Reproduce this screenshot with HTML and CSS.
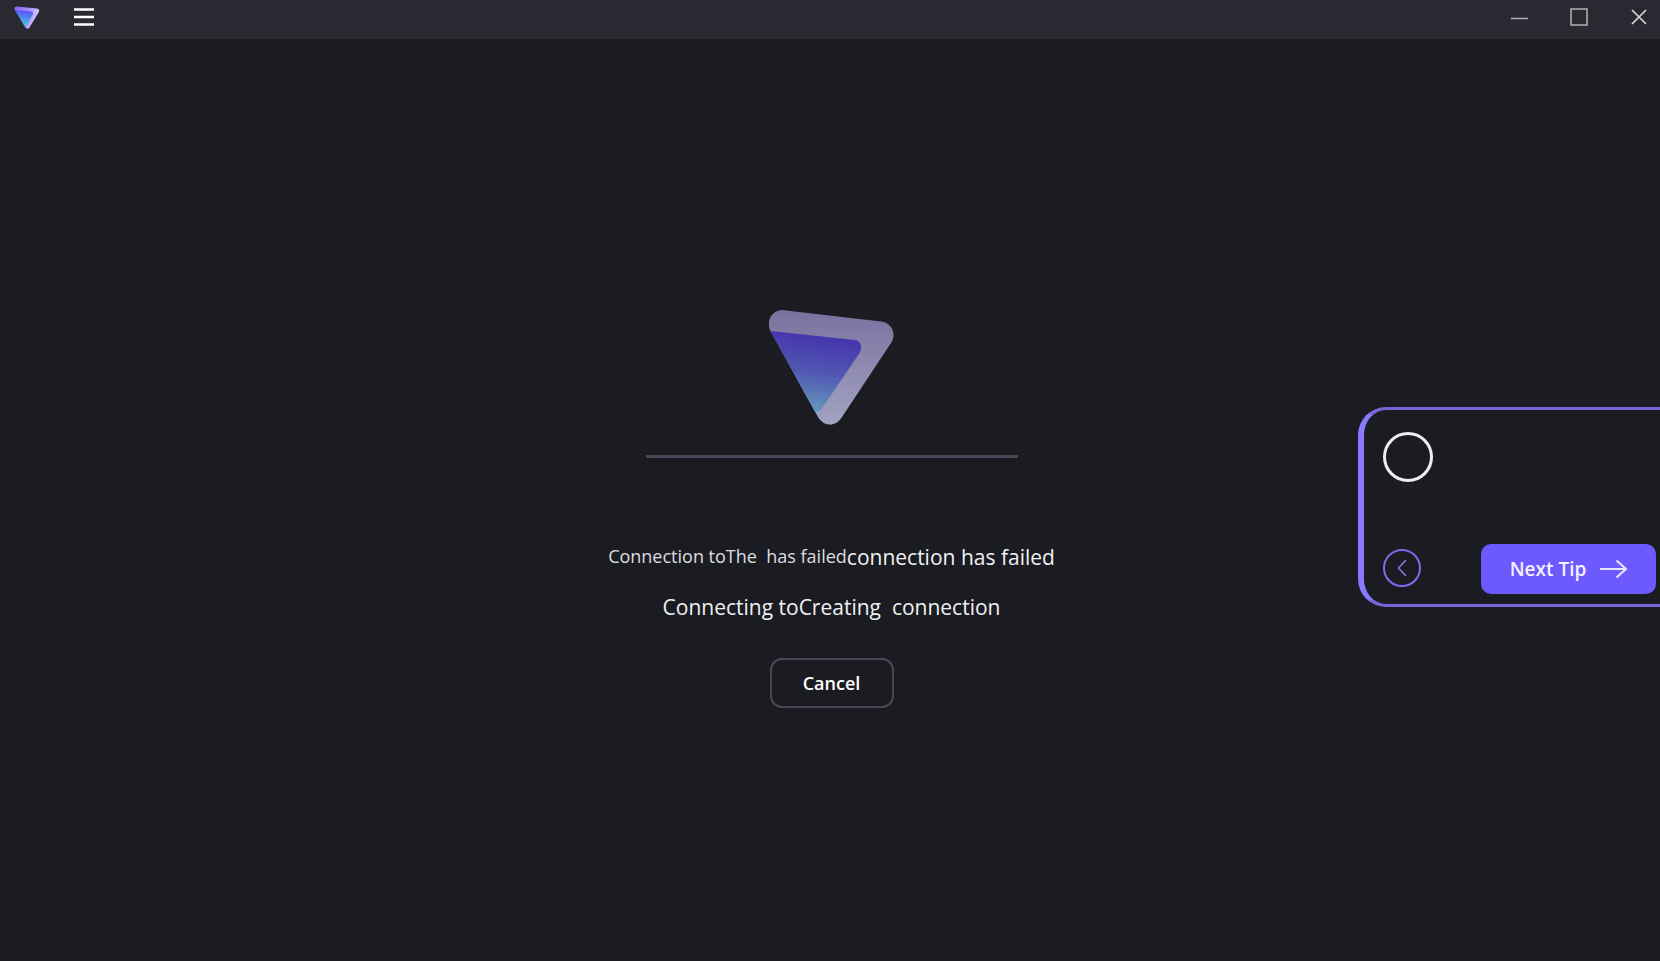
FILE: index.html
```html
<!DOCTYPE html>
<html lang="en">
<head>
<meta charset="utf-8">
<title>Connection</title>
<link rel="stylesheet" href="styles.css">
</head>
<body>
<header class="titlebar">
  <svg class="app-logo" viewBox="0 0 26 24" aria-hidden="true">
    <defs>
      <linearGradient id="mini-back" x1="0" y1="0" x2="1" y2="0.3"><stop offset="0" stop-color="#8a62f0"/><stop offset="0.55" stop-color="#a08af8"/><stop offset="1" stop-color="#d6caff"/></linearGradient>
      <linearGradient id="mini-front" x1="0.5" y1="0" x2="0.4" y2="1"><stop offset="0" stop-color="#5a4df0"/><stop offset="1" stop-color="#45d5e6"/></linearGradient>
    </defs>
    <path fill="url(#mini-back)" d="M3 0.5 23 2.500Q26 3 24.800 6L15.500 21.500Q13.500 24 11.500 21.500L.5 3Q0 .5 3 .5Z"/>
    <path fill="url(#mini-front)" d="M.8 4 17 5.500Q20 6 18.700 8.500L12.500 20Q11.500 21.500 10.500 20Z"/>
  </svg>
  <button class="menu-button" type="button" aria-label="Menu">
    <svg viewBox="0 0 20 18"><path d="M0 1.500H20M0 9H20M0 16.500H20" stroke="#fff" stroke-width="2.400"/></svg>
  </button>
  <div class="window-controls">
    <button type="button" aria-label="Minimize"><svg viewBox="0 0 18 18"><path d="M1 10.500H18" stroke="#aaa9b0" stroke-width="1.600"/></svg></button>
    <button type="button" aria-label="Maximize"><svg viewBox="0 0 18 18"><rect x="1" y="1" width="16" height="16" fill="none" stroke="#aaa9b0" stroke-width="1.600"/></svg></button>
    <button type="button" aria-label="Close"><svg viewBox="0 0 18 18"><path d="M2 2 16 16M16 2 2 16" stroke="#d5d5d9" stroke-width="1.700"/></svg></button>
  </div>
</header>
<main class="content">
  <section class="status">
    <svg class="logo" viewBox="0 0 125 115" aria-hidden="true">
      <defs>
        <linearGradient id="back" x1="0" y1="0" x2="0" y2="1"><stop offset="0" stop-color="#7a719f"/><stop offset="1" stop-color="#a3a3c2"/></linearGradient>
        <linearGradient id="front" x1="0.55" y1="0.1" x2="0.4" y2="1"><stop offset="0" stop-color="#4737ae"/><stop offset="0.45" stop-color="#5057b2"/><stop offset="1" stop-color="#659bbc"/></linearGradient>
      </defs>
      <path fill="url(#back)" d="M15 .2 112 11.500C123 13 128 24 122 33L73 107C67 117 55 117 49 107L2 22C-4 12 3-1 15 .2Z"/>
      <path fill="url(#front)" d="M1.500 21 86 30C92 31 94 37 90.500 43L54 97C51 102 48.500 103 45.500 101Z"/>
    </svg>
    <div class="progress"></div>
    <p class="message"><span class="small">Connection toThe&nbsp; has failed</span><span>connection has failed</span></p>
    <p class="message second">Connecting toCreating&nbsp; connection</p>
    <button class="cancel" type="button">Cancel</button>
  </section>
  <aside class="tip">
    <div class="tip-number"></div>
    <div class="tip-actions">
      <button class="previous" type="button" aria-label="Previous tip"><svg viewBox="0 0 10 18"><path d="M9 1 1.500 9 9 17" fill="none" stroke="#8674f4" stroke-width="1.600"/></svg></button>
      <button class="next" type="button">Next Tip<svg viewBox="0 0 27 20"><path d="M0 10H26M16.500 1.500 26 10 16.500 18.500" fill="none" stroke="#e9e4ff" stroke-width="2.200"/></svg></button>
    </div>
  </aside>
</main>
</body>
</html>
```
FILE: styles.css
```css
* { box-sizing: border-box; }
body {
  margin: 0;
  min-height: 100vh;
  display: flex;
  flex-direction: column;
  overflow-x: hidden;
  background: #1b1c21;
  color: #f0f0f2;
  font-family: "Segoe UI", "Open Sans", "Noto Sans", sans-serif;
}
button {
  padding: 0;
  border: 0;
  background: none;
  color: inherit;
  font: inherit;
  cursor: pointer;
}
svg { display: block; }
.titlebar {
  display: flex;
  align-items: flex-start;
  height: 39px;
  padding: 6px 12px 0 14px;
  background: #2a2932;
}
.app-logo { width: 26px; height: 24px; }
.menu-button { margin: 2px 0 0 34px; }
.menu-button svg { width: 20px; height: 18px; }
.window-controls {
  display: flex;
  gap: 42px;
  margin: 2px 0 0 auto;
}
.window-controls svg { width: 18px; height: 18px; }
.content {
  flex: 1;
  display: grid;
  grid-template-columns: 1fr auto 1fr;
  align-items: center;
  padding-top: 18px;
}
.status {
  grid-column: 2;
  display: flex;
  flex-direction: column;
  align-items: center;
  padding-left: 3px;
}
.logo { width: 125px; height: 115px; }
.progress {
  width: 372px;
  height: 3px;
  margin: 30px 0 84px;
  background: #4a4658;
}
.message {
  display: flex;
  margin: 0;
  font-size: 21px;
  line-height: 30px;
  white-space: nowrap;
}
.small { font-size: 18px; line-height: 28px; color: #dcdce0; }
.second { margin: 20px 0 36px; }
.cancel {
  width: 124px;
  height: 50px;
  border: 2px solid #4a4658;
  border-radius: 12px;
  font-size: 18px;
  font-weight: 600;
  color: #fff;
}
.tip {
  grid-column: 3;
  justify-self: end;
  display: flex;
  flex-direction: column;
  justify-content: space-between;
  width: 302px;
  height: 200px;
  margin-bottom: 4px;
  padding: 22px 4px 10px 19px;
  border: 3px solid #7565d8;
  border-left: 6px solid #8a78ff;
  border-right: 0;
  border-radius: 28px 0 0 28px;
}
.tip-number {
  width: 50px;
  height: 50px;
  border: 3px solid #eeeef0;
  border-radius: 50%;
}
.tip-actions {
  display: flex;
  align-items: center;
  justify-content: space-between;
}
.previous {
  display: grid;
  place-items: center;
  width: 38px;
  height: 38px;
  margin-bottom: 2px;
  border: 2px solid #7d6cf0;
  border-radius: 50%;
}
.previous svg { width: 10px; height: 18px; }
.next {
  display: flex;
  align-items: center;
  justify-content: center;
  gap: 14px;
  width: 175px;
  height: 50px;
  border-radius: 10px;
  background: #6d5aff;
  font-size: 19px;
  font-weight: 600;
  color: #f4f1ff;
}
.next svg { width: 27px; height: 20px; }
```
